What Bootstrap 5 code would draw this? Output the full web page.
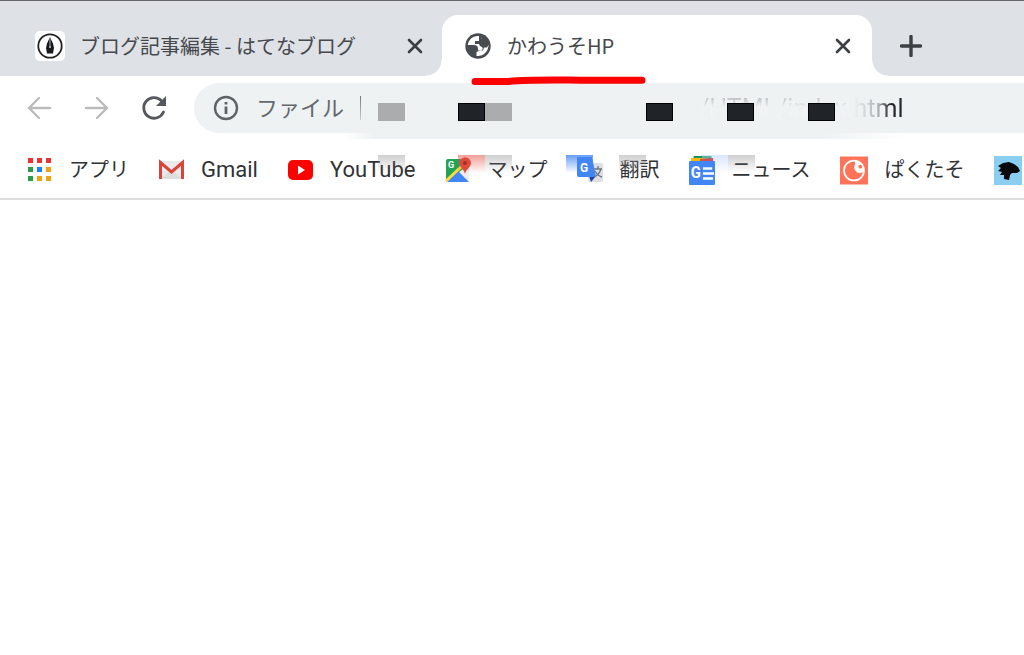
<!DOCTYPE html>
<html lang="ja">
<head>
<meta charset="utf-8">
<meta name="viewport" content="width=device-width, initial-scale=1">
<title>かわうそHP</title>
<link href="https://cdn.jsdelivr.net/npm/bootstrap@5.3.0/dist/css/bootstrap.min.css" rel="stylesheet">
<style>
body{font-family:Roboto,"Noto Sans CJK JP",sans-serif;color:#3c4043;background:#fff;overflow-x:hidden}
svg{display:block;flex:none}
.icon-button{border:0;background:none;padding:0;color:#3c4043;flex:none}
.strip{background:#dee1e6;border-top:1px solid #66666b;height:76px;padding-top:14px}
.browser-tab{font:20px/30px "Noto Sans CJK JP",sans-serif;color:#45484d;height:61px}
.tab-back{width:442px;padding:0 17px 0 35px}
.tab-front{width:430px;padding:0 19px 0 22px;background:#fff;border-radius:16px 16px 0 0}
.tab-front::before,.tab-front::after{content:"";position:absolute;bottom:0;width:16px;height:16px}
.tab-front::before{right:100%;background:radial-gradient(circle at 0 0,#dee1e6 15px,#fff 16px)}
.tab-front::after{left:100%;background:radial-gradient(circle at 100% 0,#dee1e6 15px,#fff 16px)}
.marker{position:absolute;left:28px;top:59px;z-index:3}
.site-mark{width:30px;height:30px;background:#fff;border-radius:5px}
.tab-title{margin-left:15px}
.toolbar{height:64px;padding:7px 0 7px 26px}
.nav-group{width:168px;gap:30px}
.address{background:#eef2f3;height:50px;border-radius:25px 0 0 25px;padding-left:19px}
.address::after{content:"";position:absolute;left:150px;width:560px;top:48px;height:8px;background:linear-gradient(90deg,#eef2f300,#eef2f3 30px,#eef2f3 480px,#eef2f300)}
.scheme{font-size:22px;line-height:30px;color:#65696d;margin-left:17px;padding-top:2px}
.divider{width:1px;height:24px;margin-left:16px;background:linear-gradient(#777,#ccc)}
.url{border:0;outline:0;font:25px/32px Roboto,sans-serif;margin-left:338px;padding:2px 0 0;width:240px;min-width:0;color:transparent;-webkit-background-clip:text;background-clip:text;
background-image:linear-gradient(#bfc3c5 20%,#eef2f3 48%),linear-gradient(90deg,#eef2f3,#b0b3b5 24px,#26282b 36px);
background-size:155px 100%,85px 100%;background-position:0 0,155px 0;background-repeat:no-repeat}
.redaction{position:absolute;left:184px;top:20px;z-index:2}
.block{width:27px;height:18px;background:#202327;border:1px solid #000}
.block-gray{background:#abacae;border:0}
.bookmarks{height:60px;border-bottom:2px solid #dfdfdf;padding:2px 0 0 27px;gap:30px}
.bookmark{display:flex;align-items:center;gap:16px;position:relative;font-size:20px;line-height:30px;color:#303236;text-decoration:none;white-space:nowrap;flex:none}
.latin{font-size:22px}
.smear{position:absolute;width:27px;height:18px;top:0;background:linear-gradient(#88888c66,#88888c00)}
.smear-red{background:linear-gradient(#e5493b88,#e5493b00)}
.smear-blue{background:linear-gradient(#4285f4cc,#4285f400)}
</style>
</head>
<body>
<header>
<div class="strip d-flex">
 <div class="browser-tab tab-back d-flex align-items-center">
  <span class="site-mark d-flex align-items-center justify-content-center"><svg width="28" height="28" viewBox="0 0 28 28"><circle cx="14" cy="14" r="11.7" fill="none" stroke="#222" stroke-width="1.8"/><path d="M14 5 17 11.5 18 16 17 21.5H11L10 16 11 11.5Z" fill="#17191d"/><path d="M14 6V14" stroke="#aaa"/><circle cx="14" cy="15" r="1" fill="#ccc"/></svg></span>
  <span class="tab-title text-nowrap">ブログ記事編集 - はてなブログ</span>
  <button class="icon-button ms-auto" aria-label="タブを閉じる"><svg width="20" height="20" viewBox="0 0 20 20"><path d="M4 4 16 16M16 4 4 16" stroke="currentColor" stroke-width="2.6" stroke-linecap="round"/></svg></button>
 </div>
 <div class="browser-tab tab-front position-relative d-flex align-items-center">
  <svg width="28" height="28" viewBox="0 0 28 28"><circle cx="14" cy="14" r="12.7" fill="#484b50"/><path d="M15 4C9 3.500 4.500 7.500 3.800 13H10Q14 13 14 17V18.500H18Q20 15 16 14L15 12H11V9H15Z" fill="#fff"/><path d="M18 4V8L20 11 24.500 13C24.500 19.500 19.500 24.500 12.500 24V20L16 18.500H19L20 15.500 17 12.500Z" fill="#fff"/><path d="M16 3 21 6 25 12 23 15.500H19L16 12H12V9H16L18 6Z" fill="#484b50"/></svg>
  <span class="tab-title text-nowrap">かわうそHP</span>
  <button class="icon-button ms-auto" aria-label="タブを閉じる"><svg width="20" height="20" viewBox="0 0 20 20"><path d="M4 4 16 16M16 4 4 16" stroke="currentColor" stroke-width="2.6" stroke-linecap="round"/></svg></button>
  <svg class="marker" width="176" height="12" viewBox="0 0 176 12"><path d="M5 7.500H38C60 5.500 80 6 110 6.200H172" fill="none" stroke="#f00" stroke-width="7" stroke-linecap="round"/></svg>
 </div>
 <button class="icon-button d-flex align-items-center browser-tab ms-4 ps-1" aria-label="新しいタブ"><svg width="22" height="22" viewBox="0 0 22 22"><path d="M11 1.500V20.500M1.500 11H20.500" stroke="#3c4043" stroke-width="3.400" stroke-linecap="round"/></svg></button>
</div>
<div class="toolbar d-flex">
 <nav class="nav-group d-flex align-items-center flex-shrink-0" aria-label="移動">
  <button class="icon-button" aria-label="戻る"><svg width="27" height="26" viewBox="0 0 27 26"><path d="M24 13H3M13 3 3 13 13 23" fill="none" stroke="#bbb" stroke-width="2.400" stroke-linecap="round"/></svg></button>
  <button class="icon-button" aria-label="進む"><svg width="27" height="26" viewBox="0 0 27 26"><path d="M3 13H24M14 3 24 13 14 23" fill="none" stroke="#bbb" stroke-width="2.400" stroke-linecap="round"/></svg></button>
  <button class="icon-button" aria-label="再読み込み"><svg width="28" height="28" viewBox="0 0 28 28"><path d="M23.500 18A10.300 10.300 0 1 1 21.500 6.800" fill="none" stroke="#55585c" stroke-width="2.800" stroke-linecap="round"/><path d="M26 2V12H16Z" fill="#55585c"/></svg></button>
 </nav>
 <div class="address position-relative d-flex align-items-center flex-grow-1">
  <svg width="26" height="26" viewBox="0 0 26 26"><circle cx="13" cy="13" r="11" fill="none" stroke="#5f6368" stroke-width="2.400"/><path d="M13 7V9.500M13 11.500V19" stroke="#5f6368" stroke-width="2.800"/></svg>
  <label class="scheme text-nowrap" for="url">ファイル</label><span class="divider"></span>
  <input class="url" id="url" value="/HTML/index.html">
  <div class="redaction d-flex"><span class="block block-gray"></span><span class="block" style="margin-left:53px"></span><span class="block block-gray"></span><span class="block" style="margin-left:134px"></span><span class="block" style="margin-left:54px"></span><span class="block" style="margin-left:54px"></span></div>
 </div>
</div>
<nav class="bookmarks d-flex align-items-center overflow-hidden" aria-label="ブックマーク">
 <a href="#" class="bookmark"><svg width="26" height="26" viewBox="0 0 26 26"><path d="M1 1h5v5H1zM10 1h5v5h-5zM19 1h5v5h-5z" fill="#ea3335"/><path d="M1 10h5v5H1zM1 19h5v5H1z" fill="#2c9b4b"/><path d="M10 10h5v5h-5z" fill="#1a80f5"/><path d="M19 10h5v5h-5zM10 19h5v5h-5zM19 19h5v5h-5z" fill="#f2a312"/></svg><span>アプリ</span></a>
 <a href="#" class="bookmark latin"><svg width="26" height="26" viewBox="0 0 26 26"><path d="M1 4H24V22H1Z" fill="#eaeaea"/><path d="M2 22 12.500 13 23 22" fill="#ddd"/><path d="M1.500 22V5.500L12.500 15 23.500 5.500V22" fill="none" stroke="#db4437" stroke-width="3"/></svg><span>Gmail</span></a>
 <a href="#" class="bookmark latin"><svg width="26" height="26" viewBox="0 0 26 26"><rect x="0" y="3" width="25" height="20" rx="5" fill="#f00"/><path d="M10 8.500V17.500L17 13Z" fill="#fff"/></svg><span>YouTube</span><i class="smear" style="left:90px"></i></a>
 <a href="#" class="bookmark"><svg width="26" height="26" viewBox="0 0 26 26"><rect x="1" y="2" width="23" height="23" rx="2" fill="#eee"/><path d="M1 4Q1 2 3 2H16L18 12 1 25Z" fill="#23a455"/><path d="M2 25 13 14 24 25Z" fill="#4285f4"/><path d="M1 24 17 9" stroke="#ffda44" stroke-width="3"/><text x="3" y="11" fill="#fff" font-size="9" font-weight="700">G</text><path d="M20 17C19 12 14.500 10 14.500 6A5.500 5.500 0 0 1 26 6C26 10 21 12 20 17Z" fill="#dd4b3e"/><circle cx="20" cy="6" r="2" fill="#822"/></svg><span>マップ</span><i class="smear smear-red" style="left:13px"></i><i class="smear" style="left:40px"></i></a>
 <a href="#" class="bookmark"><i class="smear smear-blue" style="left:-11px"></i><svg class="position-relative" width="26" height="26" viewBox="0 0 26 26"><rect x="11" y="6" width="15" height="19" rx="2" fill="#dedfe1"/><path d="M12 19H19L14 25Z" fill="#2340a8"/><path d="M0 0H15L19 20H2Q0 20 0 18Z" fill="#4285f4"/><text x="3" y="15" fill="#fff" font-size="12" font-weight="700">G</text><path d="M17 12H25M21 9V12M24 12Q22 18 17 20M18 14Q21 19 25 20" fill="none" stroke="#687681" stroke-width="1.300"/></svg><span>翻訳</span><i class="smear" style="left:42px"></i></a>
 <a href="#" class="bookmark"><svg width="26" height="30" viewBox="0 0 28 30" preserveAspectRatio="none"><path d="M5 1H24V8H5Z" fill="#16965b"/><path d="M14 1H24V8H14Z" fill="#64bc89"/><path d="M2 3H17L18 9H2Z" fill="#f9b90b"/><path d="M12 4 26 3 26 9H12Z" fill="#e84939"/><rect y="6" width="28" height="24" rx="1" fill="#4285f4"/><text x="2" y="23.500" fill="#fff" font-size="16" font-weight="700">G</text><path d="M15 13.500H25M15 18.500H27M15 23.500H26" stroke="#fff" stroke-width="2.400"/></svg><span>ニュース</span><i class="smear smear-blue opacity-25" style="left:12px"></i><i class="smear" style="left:39px"></i></a>
 <a href="#" class="bookmark"><svg width="28" height="29" viewBox="0 0 29 29"><path d="M0 0H29V29H0Z" fill="#ff7459"/><circle cx="14.500" cy="14.500" r="10.300" fill="none" stroke="#fff" stroke-width="1.800"/><path d="M15 4A10.500 10.500 0 0 1 25 15Q22 18.500 18 16.500Q13 13.500 15.500 8Q16 6 15 4Z" fill="#fff"/><circle cx="21" cy="10.500" r="2" fill="#ff7459"/></svg><span>ぱくたそ</span></a>
 <a href="#" class="bookmark" aria-label="ブックマーク"><svg width="28" height="29" viewBox="0 0 28 29"><path d="M0 0H28V29H0Z" fill="#8acff1"/><path d="M4 10 9 7 15 6 20 8 24 11 26 15 23 17 18 17 16 19 15 24 10 23 10 19 6 19 8 16 4 15 7 12Z" fill="#08090a"/></svg></a>
</nav>
</header>
<main></main>
<script src="https://cdn.jsdelivr.net/npm/bootstrap@5.3.0/dist/js/bootstrap.bundle.min.js"></script>
</body>
</html>
